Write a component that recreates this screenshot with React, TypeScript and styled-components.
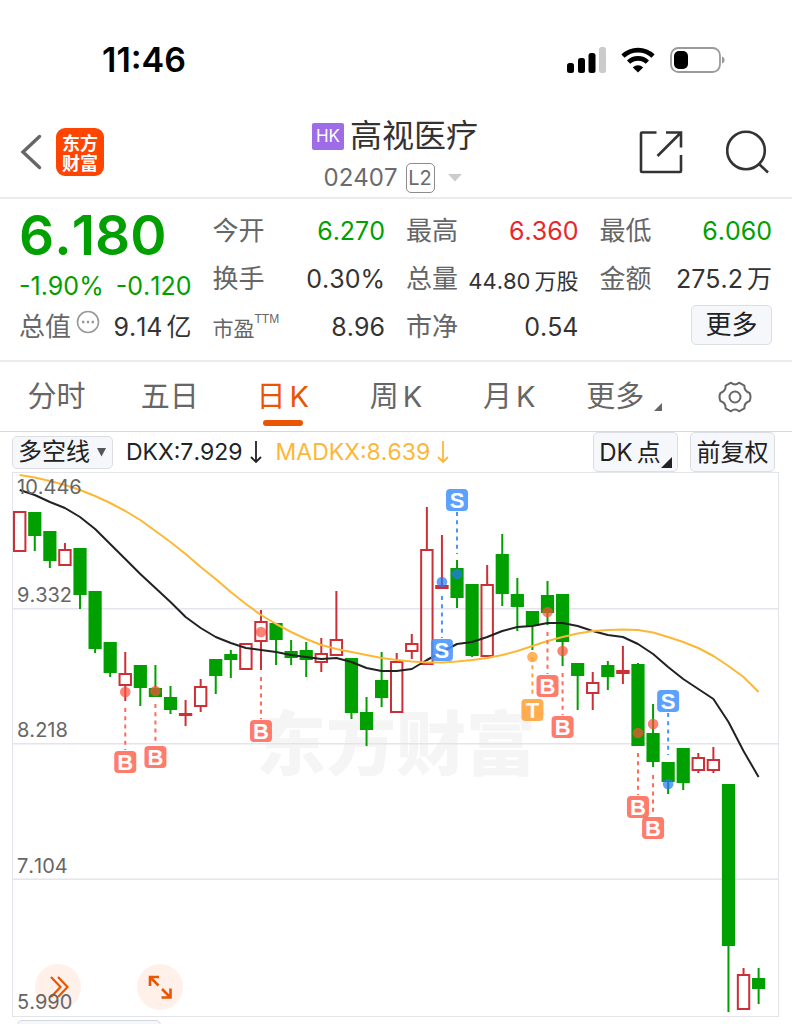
import React from 'react';
import styled, { createGlobalStyle, css } from 'styled-components';

const GREEN = '#00a000';
const RED = '#e8262b';
const ORANGE = '#ea5504';
const LINE = '#ebebee';

const GlobalStyle = createGlobalStyle`
  * { box-sizing: border-box; }
  html { scrollbar-width: none; }
  body {
    margin: 0;
    background: #fff;
    color: #333;
    font-family: Inter, 'Noto Sans CJK SC', sans-serif;
    font-kerning: none;
  }
  button, select {
    font: inherit;
    font-kerning: none;
    color: inherit;
    margin: 0;
    padding: 0;
    border: 0;
    background: none;
    cursor: pointer;
  }
  svg { display: block; }
`;

const Page = styled.main`
  display: flex;
  flex-direction: column;
  min-width: 680px;
`;

const StatusBar = styled.div`
  display: flex;
  justify-content: space-between;
  align-items: center;
  height: 105px;
  padding: 14px 66px 0 102px;
`;

const Clock = styled.time`
  font-size: 34px;
  line-height: 40px;
  font-weight: 600;
  color: #000;
`;

const StatusIcons = styled.div`
  display: flex;
  align-items: center;
  gap: 15px;
`;

const Header = styled.header`
  display: grid;
  grid-template-columns: 1fr auto 1fr;
  align-items: center;
  height: 94px;
  padding: 2px 22px 0 20px;
  border-bottom: 2px solid ${LINE};
`;

const HeaderSide = styled.div<{ $end?: boolean }>`
  display: flex;
  align-items: center;
  justify-content: ${p => (p.$end ? 'flex-end' : 'flex-start')};
  gap: ${p => (p.$end ? 43 : 14)}px;
`;

const Logo = styled.a`
  display: flex;
  flex-direction: column;
  justify-content: center;
  align-items: center;
  width: 48px;
  height: 48px;
  border-radius: 9px;
  background: #ff4500;
  color: #fff;
  font-family: 'Noto Sans CJK SC', sans-serif;
  font-size: 18px;
  line-height: 20px;
  font-weight: 700;
  text-decoration: none;
`;

const TitleBlock = styled.div`
  display: flex;
  flex-direction: column;
  align-items: center;
  padding-top: 4px;
`;

const TitleLine = styled.div`
  display: flex;
  align-items: center;
  gap: 6px;
  height: 47px;
`;

const MarketTag = styled.span`
  width: 32px;
  height: 27px;
  border-radius: 2px;
  background: #9f6ce8;
  color: #fff;
  font-size: 17px;
  line-height: 27px;
  text-align: center;
`;

const StockName = styled.h1`
  margin: 0;
  font-size: 32px;
  line-height: 48px;
  font-weight: 400;
`;

const CodeButton = styled.button`
  display: flex;
  align-items: center;
  gap: 8px;
  height: 36px;
  color: #6b6b6b;
  font-size: 24px;
  line-height: 36px;
`;

const LevelTag = styled.span`
  width: 29px;
  height: 30px;
  border: 1px solid #8c8c8c;
  border-radius: 5px;
  font-size: 20px;
  line-height: 28px;
`;

const IconButton = styled.button`
  display: flex;
`;

const Quote = styled.section`
  display: grid;
  grid-template-columns: repeat(4, 1fr);
  column-gap: 21px;
  padding: 8px 20px 9px 19px;
  border-bottom: 2px solid ${LINE};
`;

const Column = styled.div`
  display: flex;
  flex-direction: column;
  min-width: 0;
`;

const Price = styled.div`
  color: ${GREEN};
  font-size: 55px;
  line-height: 56px;
  font-weight: 600;
`;

const Change = styled.div`
  display: flex;
  justify-content: space-between;
  padding-top: 6px;
  color: ${GREEN};
  font-size: 25px;
  line-height: 34px;
  white-space: nowrap;
`;

const Row = styled.div`
  display: flex;
  align-items: center;
  justify-content: space-between;
  height: 48px;
  line-height: 36px;
  white-space: nowrap;
`;

const Label = styled.span<{ $small?: boolean }>`
  display: flex;
  align-items: center;
  gap: 5px;
  padding-top: ${p => (p.$small ? 4 : 0)}px;
  color: #666;
  font-size: ${p => (p.$small ? 21 : 26)}px;
`;

const Sup = styled.sup`
  margin: 0 0 20px -5px;
  font-family: 'Liberation Sans', sans-serif;
  font-size: 12px;
  line-height: 16px;
`;

const InfoButton = styled.button`
  display: flex;
  margin-bottom: 10px;
`;

const Value = styled.span<{ $color?: string; $small?: boolean }>`
  padding-top: ${p => (p.$small ? 4 : 0)}px;
  color: ${p => p.$color || '#333'};
  font-size: ${p => (p.$small ? 22 : 25)}px;
`;

const Gap = styled.span`
  margin-left: 4px;
`;

const chip = css`
  border: 1px solid #dcdee4;
  border-radius: 5px;
  background: #f6f7fa;
  color: #222;
`;

const MoreButton = styled.button`
  ${chip}
  width: 81px;
  height: 40px;
  margin: 0 0 4px auto;
  font-size: 26px;
  line-height: 36px;
`;

const Tabs = styled.nav`
  display: flex;
  height: 70px;
  border-bottom: 1px solid #d3d8e0;
`;

const Tab = styled.button<{ $active?: boolean }>`
  flex: 1;
  display: flex;
  flex-direction: column;
  align-items: center;
  justify-content: flex-end;
  gap: 1px;
  padding-bottom: 5px;
  color: ${p => (p.$active ? ORANGE : '#666')};
  font-size: 29px;
  line-height: 44px;

  &::after {
    content: '';
    width: 40px;
    height: 6px;
    border-radius: 3px;
    background: ${p => (p.$active ? ORANGE : 'transparent')};
  }
`;

const TabText = styled.span`
  display: flex;
  align-items: center;
  gap: 10px;
  height: 44px;
`;

const MenuTabText = styled(TabText)`
  padding-left: 4px;
`;

const Corner = styled.i<{ $size: number; $color: string }>`
  align-self: flex-end;
  width: 0;
  height: 0;
  margin-bottom: ${p => (p.$size > 8 ? 3 : 8)}px;
  border-style: solid;
  border-width: 0 0 ${p => p.$size}px ${p => p.$size}px;
  border-color: transparent transparent ${p => p.$color};
`;

const IndicatorBar = styled.div`
  display: flex;
  align-items: center;
  height: 40px;
  padding: 0 17px 0 12px;
  font-size: 24px;
  line-height: 32px;
`;

const SelectBox = styled.div`
  ${chip}
  display: flex;
  align-items: center;
  height: 33px;
  padding: 0 5px;
`;

const Select = styled.select`
  appearance: none;
  width: 78px;
  height: 31px;
  font-size: 24px;
  line-height: 30px;
  outline: none;
`;

const Reading = styled.span<{ $color: string }>`
  display: flex;
  align-items: center;
  gap: 6px;
  margin-left: 13px;
  color: ${p => p.$color};
  font-size: 23px;
`;

const Tools = styled.div`
  display: flex;
  gap: 12px;
  margin-left: auto;
`;

const ToolButton = styled.button`
  ${chip}
  display: flex;
  align-items: center;
  justify-content: center;
  width: 85px;
  height: 40px;
  padding-top: 2px;
  font-size: 24px;
  line-height: 36px;
`;

const ChartFrame = styled.section`
  position: relative;
  margin: 0 13px 0 12px;
  border: 1px solid #e3e4e9;
`;

const ChartSvg = styled.svg`
  position: relative;
  width: 100%;
  height: auto;
  pointer-events: none;
`;

const RoundButton = styled.button<{ $left: number }>`
  position: absolute;
  left: ${p => p.$left}px;
  bottom: 6px;
  display: flex;
  align-items: center;
  justify-content: center;
  width: 46px;
  height: 46px;
  border-radius: 50%;
  background: #fff0ea;
`;

const NextPanel = styled.div`
  height: 4px;
  margin: 3px 17px 0;
  overflow: hidden;

  &::before {
    content: '';
    display: block;
    width: 142px;
    height: 34px;
    border: 1px solid #d5d7de;
    border-radius: 5px;
    background: #f6f7fa;
  }
`;

/* Candle: [rising, high, bodyTop, bodyBottom, low] in plot coordinates. */
type Candle = [0 | 1, number, number, number, number];

const candles: Candle[] = [
  [1, 511, 511, 552, 552], [0, 512, 512, 536, 551], [0, 531, 531, 561, 568],
  [1, 543, 549, 566, 566], [0, 548, 548, 595, 609], [0, 591, 591, 649, 653],
  [0, 642, 642, 673, 677], [1, 652, 673, 686, 701], [0, 665, 665, 688, 706],
  [0, 665, 688, 697, 697], [0, 686, 697, 710, 714], [1, 700, 713, 716, 726],
  [1, 679, 686, 707, 712], [0, 659, 659, 676, 694], [0, 650, 654, 660, 678],
  [1, 643, 643, 670, 670], [1, 610, 621, 642, 670], [0, 623, 623, 640, 665],
  [0, 640, 651, 658, 665], [0, 642, 650, 660, 677], [1, 638, 653, 663, 672],
  [1, 591, 639, 656, 656], [0, 658, 658, 713, 719], [0, 697, 712, 730, 746],
  [0, 652, 680, 698, 707], [1, 653, 661, 713, 713], [1, 634, 643, 652, 659],
  [1, 507, 549, 665, 665], [1, 535, 585, 589, 589], [0, 560, 568, 598, 608],
  [0, 584, 584, 656, 657], [1, 565, 584, 657, 657], [0, 534, 554, 594, 606],
  [0, 578, 594, 607, 631], [0, 611, 611, 626, 650], [0, 581, 595, 613, 625],
  [0, 594, 594, 642, 666], [0, 663, 663, 676, 710], [1, 672, 682, 694, 710],
  [0, 661, 665, 677, 690], [1, 646, 670, 674, 684], [0, 663, 664, 746, 746],
  [0, 704, 733, 762, 767], [0, 762, 762, 782, 794], [0, 748, 748, 783, 790],
  [1, 753, 757, 771, 773], [1, 747, 759, 771, 773], [0, 784, 784, 946, 1012],
  [1, 968, 974, 1010, 1010], [0, 968, 978, 989, 1004],
];

const dkx = [
  490, 495, 502, 508, 517, 529, 544, 559, 574, 588, 602, 617, 628, 637, 643, 648, 650,
  652, 655, 657, 659, 658, 662, 668, 671, 671, 669, 660, 652, 644, 642, 637, 631, 627,
  626, 623, 623, 626, 631, 635, 637, 644, 654, 667, 679, 689, 699, 722, 751, 777,
];

const madkx = [
  475, 477.5, 481, 485, 490, 496, 503, 511, 520, 531, 542, 554, 567, 579, 592, 604, 615,
  624, 632, 639, 645, 649, 652, 655, 658, 660, 661.5, 662.5, 662.5, 661.5, 660, 658, 655,
  651, 646, 641, 637, 633.5, 631, 630, 629.5, 630, 632.5, 637, 642, 648, 656, 666, 677, 692,
];

type Mark = { i: number; kind: 'B' | 'S' | 'T'; dot: number; from: number; to: number; box: number };

const marks: Mark[] = [
  { i: 7, kind: 'B', dot: 692, from: 708, to: 750, box: 751 },
  { i: 9, kind: 'B', dot: 691, from: 704, to: 745, box: 746 },
  { i: 16, kind: 'B', dot: 632, from: 677, to: 719, box: 720 },
  { i: 28, kind: 'S', dot: 582, from: 596, to: 638, box: 639 },
  { i: 29, kind: 'S', dot: 574, from: 512, to: 554, box: 489 },
  { i: 34, kind: 'T', dot: 657, from: 657, to: 698, box: 699 },
  { i: 36, kind: 'B', dot: 651, from: 673, to: 715, box: 716 },
  { i: 35, kind: 'B', dot: 612, from: 632, to: 674, box: 675 },
  { i: 41, kind: 'B', dot: 733, from: 753, to: 795, box: 796 },
  { i: 42, kind: 'B', dot: 724, from: 775, to: 816, box: 817 },
  { i: 43, kind: 'S', dot: 784, from: 713, to: 755, box: 690 },
];

const markColors = {
  B: { box: '#ff6a59', dot: '#ff4f3a' },
  S: { box: '#4794ff', dot: '#2378f5' },
  T: { box: '#ffa235', dot: '#ff9414' },
};

const axis = [
  { y: 494, text: '10.446' },
  { y: 602, text: '9.332' },
  { y: 737, text: '8.218' },
  { y: 873, text: '7.104' },
  { y: 1009, text: '5.990' },
];

const cx = (i: number) => 19.7 + i * 15.08;
const toPoints = (ys: number[]) => ys.map((y, i) => `${cx(i).toFixed(1)},${y}`).join(' ');

function CandleShape({ data, x }: { data: Candle; x: number }) {
  const [up, high, top, bottom, low] = data;
  if (up) {
    return (
      <g stroke="#cc2f36" strokeWidth="2" fill="none">
        {high < top && <line x1={x} x2={x} y1={high} y2={top} />}
        {low > bottom && <line x1={x} x2={x} y1={bottom} y2={low} />}
        <rect x={x - 5.7} y={top + 1} width="11.4" height={Math.max(bottom - top - 2, 1)} />
      </g>
    );
  }
  return (
    <g fill={GREEN}>
      <rect x={x - 1} y={high} width="2" height={low - high} />
      <rect x={x - 6.6} y={top} width="13.2" height={bottom - top} />
    </g>
  );
}

function MarkShape({ mark }: { mark: Mark }) {
  const x = cx(mark.i);
  const c = markColors[mark.kind];
  return (
    <g>
      <circle cx={x} cy={mark.dot} r="5.3" fill={c.dot} opacity="0.7" />
      <line x1={x} x2={x} y1={mark.from} y2={mark.to} stroke={c.box} strokeWidth="2" strokeDasharray="4 4.2" />
      <rect x={x - 11} y={mark.box} width="22" height="22" rx="4" fill={c.box} opacity="0.88" />
      <text
        x={x}
        y={mark.box + 19}
        textAnchor="middle"
        fill="#fff"
        fontFamily="Liberation Sans, sans-serif"
        fontWeight="700"
        fontSize="22"
      >
        {mark.kind}
      </text>
    </g>
  );
}

function Chart() {
  return (
    <ChartFrame>
      <RoundButton $left={22}>
        <svg width="22" height="24" viewBox="0 0 22 24" fill="none" stroke={ORANGE} strokeWidth="2.2">
          <path d="M4 2l9.500 10L4 22M11 2l9.500 10L11 22" />
        </svg>
      </RoundButton>
      <RoundButton $left={124}>
        <svg width="24" height="24" viewBox="0 0 24 24" fill="none" stroke={ORANGE} strokeWidth="2.600">
          <path d="M2 11V2h9M2 2l8.500 8.500M14 14l8.500 8.500M22.500 13.500v9h-9" />
        </svg>
      </RoundButton>
      <ChartSvg viewBox="13 473 765 543">
        <text
          x="396"
          y="770"
          textAnchor="middle"
          fill="#f5f5f6"
          fontFamily="Noto Sans CJK SC, sans-serif"
          fontWeight="900"
          fontSize="70"
        >
          东方财富
        </text>
        <g stroke="#e3e4ec" strokeWidth="1.5">
          <line x1="13" x2="778" y1="608.7" y2="608.7" />
          <line x1="13" x2="778" y1="743.8" y2="743.8" />
          <line x1="13" x2="778" y1="879.2" y2="879.2" />
        </g>
        {candles.map((c, i) => (
          <CandleShape key={i} data={c} x={cx(i)} />
        ))}
        <polyline points={toPoints(dkx)} fill="none" stroke="#222" strokeWidth="2" strokeLinejoin="round" />
        <polyline points={toPoints(madkx)} fill="none" stroke="#fdb737" strokeWidth="2" strokeLinejoin="round" />
        {marks.map(m => (
          <MarkShape key={m.i} mark={m} />
        ))}
        <g fill="#666" fontSize="20">
          {axis.map(a => (
            <text key={a.text} x="17" y={a.y}>
              {a.text}
            </text>
          ))}
        </g>
      </ChartSvg>
    </ChartFrame>
  );
}

function DownArrow() {
  return (
    <svg width="14" height="24" viewBox="0 0 14 24" fill="none" stroke="currentColor" strokeWidth="1.8">
      <path d="M7 1v21M2 17l5 5 5-5" />
    </svg>
  );
}

export default function App() {
  return (
    <Page>
      <GlobalStyle />
      <StatusBar>
        <Clock>11:46</Clock>
        <StatusIcons>
          <svg width="39" height="26" viewBox="0 0 39 26">
            <rect x="0" y="16" width="7" height="10" rx="2.500" />
            <rect x="11" y="11" width="7" height="15" rx="2.500" />
            <rect x="21.500" y="6" width="7" height="20" rx="2.500" />
            <rect x="32" y="0" width="7" height="26" rx="2.500" fill="#cbcbcb" />
          </svg>
          <svg width="34" height="26" viewBox="0 0 34 26">
            <g fill="none" stroke="#000" strokeWidth="4.600">
              <path d="M2 9.200a21.500 21.500 0 0 1 30 0" />
              <path d="M7.600 15.200a13.500 13.500 0 0 1 18.800 0" />
            </g>
            <path d="M17 25.500l-5.200-5.100a7.400 7.400 0 0 1 10.400 0z" />
          </svg>
          <svg width="56" height="26" viewBox="0 0 56 26">
            <rect x="1" y="1" width="49" height="24" rx="7.500" fill="none" stroke="#9a9a9a" strokeWidth="1.800" />
            <rect x="4" y="4" width="14" height="18" rx="5" />
            <path d="M52 9.500c3.500 1 3.500 6 0 7z" fill="#9a9a9a" />
          </svg>
        </StatusIcons>
      </StatusBar>

      <Header>
        <HeaderSide>
          <IconButton>
            <svg width="22" height="36" viewBox="0 0 22 36" fill="none" stroke="#666" strokeWidth="3.400" strokeLinecap="round">
              <path d="M19.500 2.500L3 18l16.500 15.500" />
            </svg>
          </IconButton>
          <Logo href="#">
            <span>东方</span>
            <span>财富</span>
          </Logo>
        </HeaderSide>
        <TitleBlock>
          <TitleLine>
            <MarketTag>HK</MarketTag>
            <StockName>高视医疗</StockName>
          </TitleLine>
          <CodeButton>
            <span>02407</span>
            <LevelTag>L2</LevelTag>
            <svg width="24" height="8" viewBox="0 0 24 8">
              <path d="M5 0h14l-7 7.500z" fill="#ccc" />
            </svg>
          </CodeButton>
        </TitleBlock>
        <HeaderSide $end>
          <IconButton>
            <svg width="44" height="44" viewBox="0 0 44 44" fill="none" stroke="#333" strokeWidth="2.600">
              <path d="M17.500 2.500H3a1 1 0 0 0-1 1V41a1 1 0 0 0 1 1h38a1 1 0 0 0 1-1V25" />
              <path d="M27 2.500h15v15M42 2.500L18.500 26" />
            </svg>
          </IconButton>
          <IconButton>
            <svg width="44" height="44" viewBox="0 0 44 44" fill="none" stroke="#333" strokeWidth="2.600">
              <circle cx="20" cy="20.500" r="18.800" />
              <path d="M32.500 33.500l9.500 9" />
            </svg>
          </IconButton>
        </HeaderSide>
      </Header>

      <Quote>
        <Column>
          <Price>6.180</Price>
          <Change>
            <span>-1.90%</span>
            <span>-0.120</span>
          </Change>
          <Row>
            <Label>
              总值
              <InfoButton>
                <svg width="24" height="24" viewBox="0 0 24 24" fill="none" stroke="#999" strokeWidth="1.600">
                  <circle cx="12" cy="12" r="10.500" />
                  <path d="M6 12h2.400M10.800 12h2.400M15.600 12H18" strokeWidth="2.400" />
                </svg>
              </InfoButton>
            </Label>
            <Value>
              9.14<Gap>亿</Gap>
            </Value>
          </Row>
        </Column>
        <Column>
          <Row>
            <Label>今开</Label>
            <Value $color={GREEN}>6.270</Value>
          </Row>
          <Row>
            <Label>换手</Label>
            <Value>0.30%</Value>
          </Row>
          <Row>
            <Label $small>
              市盈<Sup>TTM</Sup>
            </Label>
            <Value>8.96</Value>
          </Row>
        </Column>
        <Column>
          <Row>
            <Label>最高</Label>
            <Value $color={RED}>6.360</Value>
          </Row>
          <Row>
            <Label>总量</Label>
            <Value $small>
              44.80<Gap>万股</Gap>
            </Value>
          </Row>
          <Row>
            <Label>市净</Label>
            <Value>0.54</Value>
          </Row>
        </Column>
        <Column>
          <Row>
            <Label>最低</Label>
            <Value $color={GREEN}>6.060</Value>
          </Row>
          <Row>
            <Label>金额</Label>
            <Value>
              275.2<Gap>万</Gap>
            </Value>
          </Row>
          <Row>
            <MoreButton>更多</MoreButton>
          </Row>
        </Column>
      </Quote>

      <Tabs>
        <Tab>分时</Tab>
        <Tab>五日</Tab>
        <Tab $active>
          <span>
            日<Gap>K</Gap>
          </span>
        </Tab>
        <Tab>
          <span>
            周<Gap>K</Gap>
          </span>
        </Tab>
        <Tab>
          <span>
            月<Gap>K</Gap>
          </span>
        </Tab>
        <Tab>
          <MenuTabText>
            更多
            <Corner $size={8} $color="#666" />
          </MenuTabText>
        </Tab>
        <Tab>
          <TabText>
            <svg width="34" height="32" viewBox="0 0 34 32" fill="none" stroke="#666" strokeWidth="2">
              <circle cx="17" cy="16" r="5.500" />
              <path
                d="M13 1.700Q17 5.200 21 1.700L26.400 4.600Q26 10.200 31.600 12Q33.400 16 31.600 20Q26 21.800 26.400 27.400L21 30.300Q17 26.800 13 30.300L7.600 27.400Q8 21.800 2.400 20Q.6 16 2.400 12Q8 10.200 7.600 4.600Z"
                strokeLinejoin="round"
              />
            </svg>
          </TabText>
        </Tab>
      </Tabs>

      <IndicatorBar>
        <SelectBox>
          <Select defaultValue="多空线">
            <option>多空线</option>
          </Select>
          <svg width="11" height="9" viewBox="0 0 11 9">
            <path d="M1 0h9L5.500 8.500z" fill="#555" />
          </svg>
        </SelectBox>
        <Reading $color="#222">
          DKX:7.929
          <DownArrow />
        </Reading>
        <Reading $color="#fdb737">
          MADKX:8.639
          <DownArrow />
        </Reading>
        <Tools>
          <ToolButton>
            <span>
              DK<Gap>点</Gap>
            </span>
            <Corner $size={11} $color="#222" />
          </ToolButton>
          <ToolButton>前复权</ToolButton>
        </Tools>
      </IndicatorBar>

      <Chart />
      <NextPanel />
    </Page>
  );
}
